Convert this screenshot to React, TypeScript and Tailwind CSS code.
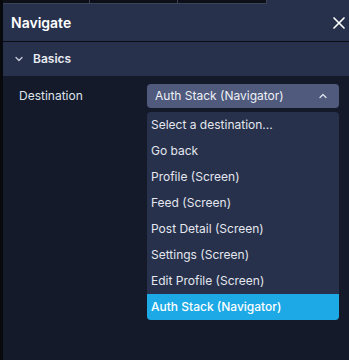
import { X, ChevronDown, ChevronUp } from "lucide-react";

const OPTIONS = [
  "Select a destination...",
  "Go back",
  "Profile (Screen)",
  "Feed (Screen)",
  "Post Detail (Screen)",
  "Settings (Screen)",
  "Edit Profile (Screen)",
  "Auth Stack (Navigator)",
];

export default function App() {
  const selected = "Auth Stack (Navigator)";
  return (
    <div
      className="flex h-[360px] w-[349px] overflow-hidden bg-[#0a0b10]"
      style={{ fontFamily: "Inter, 'Noto Sans', sans-serif" }}
    >
      {/* left gutter */}
      <div className="w-[3px] shrink-0 bg-[#08090c]" />

      <div className="flex min-w-0 flex-1 flex-col bg-[#141a2a]">
        {/* tab strip remnant */}
        <div className="flex h-[4px] shrink-0 bg-[#27314c]">
          <div className="flex w-[264px] border-r border-b border-[#3a4255] bg-[#0c0f18]">
            <div className="w-[87px] border-r border-[#3a4255]" />
            <div className="w-[88px] border-r border-[#3a4255]" />
          </div>
        </div>

        {/* header */}
        <div className="flex h-[37px] shrink-0 items-center justify-between bg-[#27314c] pl-[8px]">
          <span className="text-[14px] font-semibold text-white">Navigate</span>
          <X size={20} strokeWidth={2} className="text-white" />
        </div>
        <div className="h-px shrink-0 bg-[#0a0c12]" />

        {/* section header */}
        <div className="flex h-[34px] shrink-0 items-center gap-[8px] bg-[#27314c] pl-[10px]">
          <ChevronDown size={12} strokeWidth={2.5} className="text-[#c9cfdc]" />
          <span className="text-[12px] font-semibold text-[#e8ebf2]">Basics</span>
        </div>

        {/* body */}
        <div className="flex flex-1 flex-col pt-[8px]">
          <div className="flex items-start">
            <div className="flex h-[24px] w-[144px] shrink-0 items-center pl-[16px] text-[12px] text-[#dfe3ec]">
              Destination
            </div>
            <div className="flex w-[192px] flex-col gap-[4px]">
              <div className="flex h-[24px] items-center justify-between rounded-[4px] bg-[#4f5a7d] pl-[8px] pr-[10px]">
                <span className="text-[12px] text-[#eef0f6]">{selected}</span>
                <ChevronUp size={12} strokeWidth={2.5} className="text-[#dfe3ec]" />
              </div>
              <div className="flex flex-col overflow-hidden rounded-[4px] bg-[#27314c]">
                {OPTIONS.map((o) => (
                  <div
                    key={o}
                    className={
                      o === selected
                        ? "flex h-[26px] items-center bg-[#1ca9e6] pl-[4px] text-[12px] font-medium text-white"
                        : "flex h-[26px] items-center pl-[4px] text-[12px] text-[#e4e7ee]"
                    }
                  >
                    {o}
                  </div>
                ))}
              </div>
            </div>
          </div>
        </div>
      </div>
    </div>
  );
}
